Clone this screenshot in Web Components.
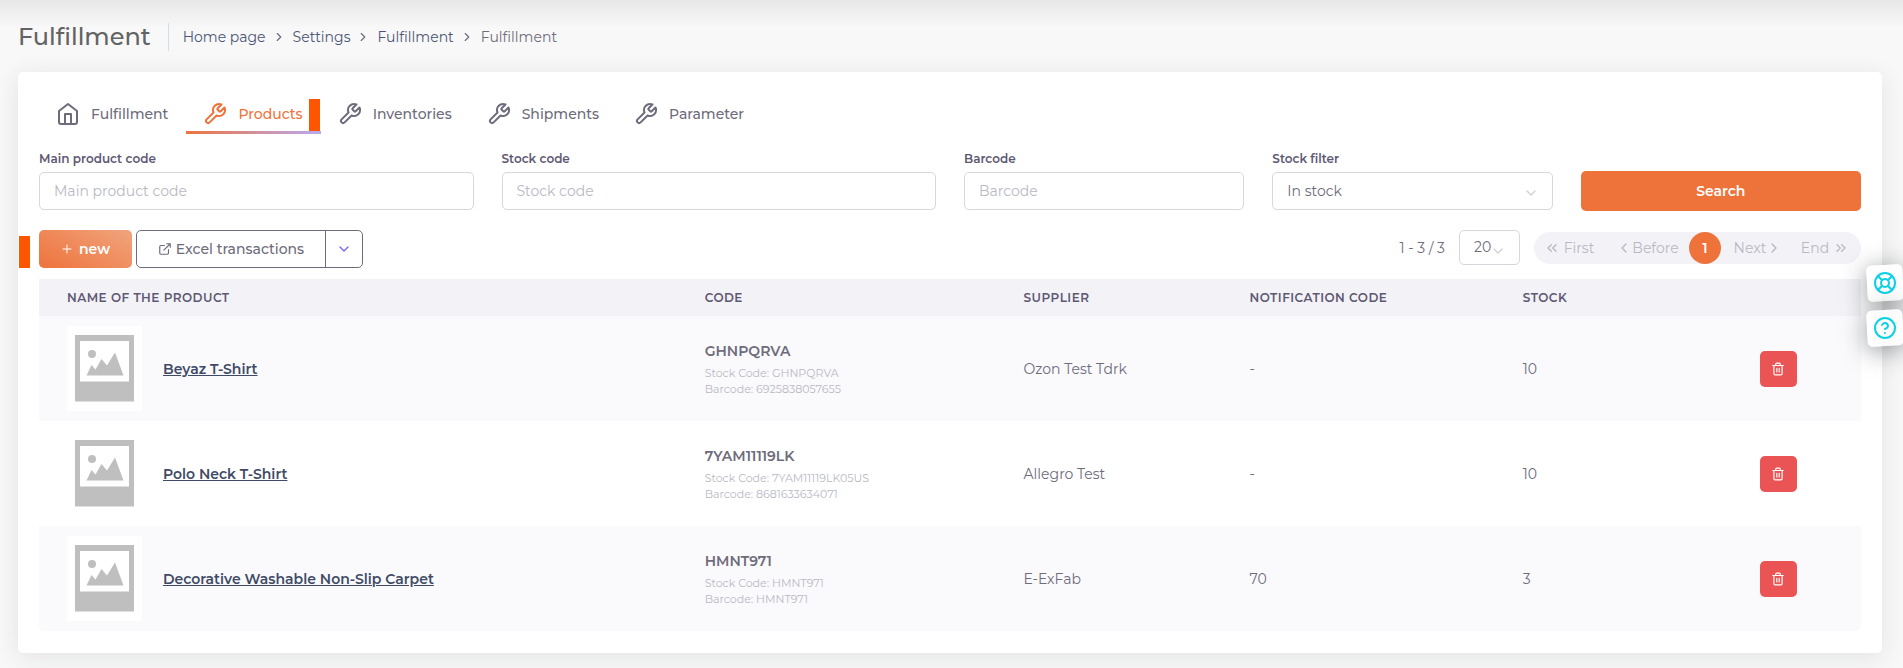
<!DOCTYPE html>
<html lang="en">
<head>
<meta charset="utf-8">
<title>Fulfillment</title>
<meta name="viewport" content="width=device-width, initial-scale=1">
<style>
  html { height: 100%; }
  body {
    margin: 0;
    min-height: 100%;
    background: #f8f8f8;
    color: #6e6b7b;
    font: 400 14px/20px Montserrat, Inter, "Open Sans", sans-serif;
    font-variant-ligatures: none;
  }
</style>
</head>
<body>
<fulfillment-page></fulfillment-page>

<script>
const ICONS = {
  home: '<path d="M3 9l9-7 9 7v11a2 2 0 0 1-2 2H5a2 2 0 0 1-2-2z"/><path d="M9 22V12h6v10"/>',
  tool: '<path d="M14.7 6.3a1 1 0 0 0 0 1.4l1.6 1.6a1 1 0 0 0 1.4 0l3.77-3.77a6 6 0 0 1-7.94 7.94l-6.91 6.91a2.12 2.12 0 0 1-3-3l6.91-6.91a6 6 0 0 1 7.94-7.94l-3.76 3.76z"/>',
  right: '<path d="M9 18l6-6-6-6"/>',
  left: '<path d="M15 18l-6-6 6-6"/>',
  down: '<path d="M6 9l6 6 6-6"/>',
  first: '<path d="M11 17l-5-5 5-5M18 17l-5-5 5-5"/>',
  last: '<path d="M13 17l5-5-5-5M6 17l5-5-5-5"/>',
  plus: '<path d="M12 4v16M4 12h16"/>',
  external: '<path d="M18 13v6a2 2 0 0 1-2 2H5a2 2 0 0 1-2-2V8a2 2 0 0 1 2-2h6M15 3h6v6M10 14L21 3"/>',
  trash: '<path d="M3 6h18M19 6v14a2 2 0 0 1-2 2H7a2 2 0 0 1-2-2V6m3 0V4a2 2 0 0 1 2-2h4a2 2 0 0 1 2 2v2M10 11v6M14 11v6"/>',
  buoy: '<circle cx="12" cy="12" r="10"/><circle cx="12" cy="12" r="4"/><path d="M4.93 4.93l4.24 4.24M14.83 14.83l4.24 4.24M14.83 9.17l4.24-4.24M4.93 19.07l4.24-4.24"/>',
  help: '<circle cx="12" cy="12" r="10"/><path d="M9.09 9a3 3 0 0 1 5.83 1c0 2-3 3-3 3M12 17h.01"/>'
};

/* Shared base: renders the class template once into an open shadow root. */
class Base extends HTMLElement {
  connectedCallback() {
    if (this.shadowRoot) return;
    this.attachShadow({ mode: 'open' }).innerHTML =
      '<style>*,*::before,*::after{box-sizing:border-box}button,input,select{font:inherit;font-variant-ligatures:none;margin:0}' +
      this.css() + '</style>' + this.html();
  }
  attr(name, fallback = '') { return this.getAttribute(name) ?? fallback; }
}

customElements.define('ui-icon', class extends Base {
  css() {
    const s = this.attr('size', '14');
    return `:host{display:inline-flex;flex:none;width:${s}px;height:${s}px}
      svg{width:100%;height:100%;fill:none;stroke:currentColor;stroke-width:${this.attr('weight', '2')};stroke-linecap:round;stroke-linejoin:round}`;
  }
  html() { return `<svg viewBox="0 0 24 24" aria-hidden="true">${ICONS[this.attr('name')]}</svg>`; }
});

customElements.define('page-header', class extends Base {
  css() { return `
    :host{display:flex;align-items:center;height:28px}
    h1{margin:0;padding-right:17px;font-size:24px;line-height:28px;font-weight:500;color:#636363;border-right:1px solid #d6dce1}
    nav{display:flex;align-items:center;padding-left:14px}
    ol{display:flex;align-items:center;margin:0;padding:0;list-style:none}
    li{display:flex;align-items:center}
    li ui-icon{margin:0 7px 0 6px}
    a{color:#4b5575;text-decoration:none}`; }
  html() {
    return `<h1>Fulfillment</h1><nav aria-label="Breadcrumb"><ol>
      <li><a href="#">Home page</a><ui-icon name="right"></ui-icon></li>
      <li><a href="#">Settings</a><ui-icon name="right"></ui-icon></li>
      <li><a href="#">Fulfillment</a><ui-icon name="right"></ui-icon></li>
      <li>Fulfillment</li></ol></nav>`;
  }
});

customElements.define('nav-tab', class extends Base {
  css() { return `
    :host{display:block;position:relative}
    a{display:flex;align-items:center;gap:11px;height:40px;padding:0 18px 0 17px;color:inherit;text-decoration:none;font-weight:500}
    :host([active]){color:#ee733b}
    :host([active]) a::after{content:"";position:absolute;left:0;right:0;bottom:0;height:3px;background:linear-gradient(30deg,#ee733b,#b9aaf5)}
    .mark{display:none}
    :host([active]) .mark{display:block;position:absolute;right:1px;bottom:3px;width:11px;height:32px;background:#ff5500}`; }
  html() { return `<a href="#"><ui-icon name="${this.attr('icon')}" size="24"></ui-icon><slot></slot></a><span class="mark"></span>`; }
});

customElements.define('form-field', class extends Base {
  css() { return `
    :host{display:block}
    label{display:block;height:14px;margin-bottom:6px;font-size:12px;line-height:14px;font-weight:600;color:#5e5873}
    .box{position:relative}
    input,select{display:block;width:100%;height:38px;padding:0 14px 1px;border:1px solid #d8d6de;border-radius:5px;background:#fff;color:#6e6b7b;appearance:none;outline:0}
    input::placeholder{color:#b9b9c3;opacity:1}
    ui-icon{position:absolute;right:14px;top:13px;color:#d0d0d6}`; }
  html() {
    const label = this.attr('label');
    const control = this.hasAttribute('option')
      ? `<select id="c"><option>${this.attr('option')}</option></select><ui-icon name="down" size="16"></ui-icon>`
      : `<input id="c" type="text" placeholder="${label}">`;
    return `<label for="c">${label}</label><div class="box">${control}</div>`;
  }
});

customElements.define('filter-form', class extends Base {
  css() { return `
    :host{display:grid;grid-template-columns:repeat(12,1fr);column-gap:28px;align-items:end}
    form-field{grid-column:span 2}
    form-field[wide]{grid-column:span 3}
    button{grid-column:span 2;height:40px;margin-bottom:-1px;padding:0;border:0;border-radius:5px;background:#ee733b;color:#fff;font-weight:600}`; }
  html() {
    return `<form-field wide label="Main product code"></form-field>
      <form-field wide label="Stock code"></form-field>
      <form-field label="Barcode"></form-field>
      <form-field label="Stock filter" option="In stock"></form-field>
      <button type="button">Search</button>`;
  }
});

customElements.define('page-nav', class extends Base {
  css() { return `
    :host{display:flex;align-items:center}
    .count{margin-right:14px}
    .size{position:relative;margin-right:14px}
    select{display:block;width:61px;height:35px;padding:0 0 2px 14px;border:1px solid #d8d6de;border-radius:5px;background:#fff;color:#6e6b7b;appearance:none}
    .size ui-icon{position:absolute;right:14px;top:13px;color:#d0d0d6}
    nav{display:grid;grid-template-columns:74px 81px 32px 68px 72px;height:32px;border-radius:16px;background:#f3f2f7}
    a{display:flex;align-items:center;justify-content:center;color:#b9b9c3;text-decoration:none}
    .far{gap:4px}
    .first{padding-right:4px}
    .before{padding-right:2px}
    .next{padding-left:6px}
    .on{border-radius:16px;background:#ee733b;color:#fff;font-weight:600}`; }
  html() {
    return `<span class="count">1 - 3 / 3</span>
      <div class="size"><select aria-label="Rows per page"><option>20</option></select><ui-icon name="down" size="16"></ui-icon></div>
      <nav aria-label="Pages">
        <a class="far first" href="#"><ui-icon name="first" size="16"></ui-icon>First</a>
        <a class="before" href="#"><ui-icon name="left" size="16"></ui-icon>Before</a>
        <a class="on" href="#" aria-current="page">1</a>
        <a class="next" href="#">Next<ui-icon name="right" size="16"></ui-icon></a>
        <a class="far" href="#">End<ui-icon name="last" size="16"></ui-icon></a>
      </nav>`;
  }
});

customElements.define('action-bar', class extends Base {
  css() { return `
    :host{display:flex;align-items:flex-start;position:relative}
    .mark{position:absolute;left:-20px;top:6px;width:11px;height:32px;background:#ff5500}
    button{display:flex;align-items:center;justify-content:center;height:38px;padding:0;color:#6e6b7b;background:#fff;border:1px solid #6e6b7b}
    .new{gap:6px;width:93px;margin-right:4px;border:0;border-radius:5px;background:linear-gradient(30deg,#ee733b,#f1a47e);color:#fff;font-weight:600}
    .excel{gap:4px;width:190px;border-radius:5px 0 0 5px;font-weight:500}
    .more{width:38px;margin-left:-1px;border-radius:0 5px 5px 0;color:#7367f0}
    page-nav{margin-left:auto}`; }
  html() {
    return `<span class="mark"></span>
      <button class="new" type="button"><ui-icon name="plus" size="12"></ui-icon>new</button>
      <button class="excel" type="button"><ui-icon name="external"></ui-icon>Excel transactions</button>
      <button class="more" type="button" aria-label="More"><ui-icon name="down" size="16"></ui-icon></button>
      <page-nav></page-nav>`;
  }
});

customElements.define('photo-placeholder', class extends Base {
  css() { return ':host{display:block;flex:none;width:75px;height:85px;background:#fff}svg{display:block}'; }
  html() {
    return `<svg width="75" height="85" viewBox="0 0 75 85" role="img" aria-label="No photo">
      <path fill="#bfbfbf" d="M8 9h59v66.500H8z"/><path fill="#fff" d="M13 15h49v40.500H13z"/>
      <circle cx="25" cy="28" r="4" fill="#bfbfbf"/>
      <path fill="#bfbfbf" d="M19.500 49.500L24.500 39l4 4.500L34.500 33l5.500 6.500L48 26.500l8.500 23z"/></svg>`;
  }
});

customElements.define('product-table', class extends Base {
  rows = [
    ['Beyaz T-Shirt', 'GHNPQRVA', 'GHNPQRVA', '6925838057655', 'Ozon Test Tdrk', '-', '10'],
    ['Polo Neck T-Shirt', '7YAM11119LK', '7YAM11119LK05US', '8681633634071', 'Allegro Test', '-', '10'],
    ['Decorative Washable Non-Slip Carpet', 'HMNT971', 'HMNT971', 'HMNT971', 'E-ExFab', '70', '3']
  ];
  css() { return `
    :host{display:block}
    table{width:100%;table-layout:fixed;border-collapse:collapse}
    th{height:37px;padding:0 28px;background:#f3f2f7;color:#5e5873;font-size:12px;font-weight:600;letter-spacing:0.04em;text-align:left;text-transform:uppercase;white-space:nowrap}
    td{height:105px;padding:0 28px;vertical-align:middle}
    tbody tr:nth-child(odd) td{background:#fafafc}
    tr:last-child td:first-child{border-bottom-left-radius:5px}
    tr:last-child td:last-child{border-bottom-right-radius:5px}
    .item{display:flex;align-items:center;gap:21px}
    .item a{color:#404a66;font-weight:600}
    strong{display:block;margin-bottom:4px;font-weight:600}
    small{display:block;font-size:11px;line-height:16px;color:#b9b9c3}
    button{display:flex;align-items:center;justify-content:center;width:37px;height:36px;padding:0;border:0;border-radius:5px;background:#ea5455;color:#fff}`; }
  html() {
    const cols = ['35%', '17.5%', '12.4%', '15%', '13%', 'auto'].map(w => `<col style="width:${w}">`).join('');
    const head = ['Name of the product', 'Code', 'Supplier', 'Notification code', 'Stock', '']
      .map(t => t ? `<th scope="col">${t}</th>` : '<th aria-label="Actions"></th>').join('');
    const body = this.rows.map(([name, code, stockCode, barcode, supplier, note, stock]) => `<tr>
      <td><div class="item"><photo-placeholder></photo-placeholder><a href="#">${name}</a></div></td>
      <td><strong>${code}</strong><small>Stock Code: ${stockCode}</small><small>Barcode: ${barcode}</small></td>
      <td>${supplier}</td><td>${note}</td><td>${stock}</td>
      <td><button type="button" aria-label="Delete ${name}"><ui-icon name="trash"></ui-icon></button></td></tr>`).join('');
    return `<table><colgroup>${cols}</colgroup><thead><tr>${head}</tr></thead><tbody>${body}</tbody></table>`;
  }
});

customElements.define('float-help', class extends Base {
  css() { return `
    :host{position:fixed;right:0;top:265px;display:grid;gap:9px}
    button{display:flex;align-items:center;justify-content:center;width:36px;height:36px;padding:0;border:0;border-radius:5px;background:linear-gradient(#ffffffe6,#ffffffb3);color:#0cd1e8;box-shadow:0 4px 24px #22292f80;transform:rotate(-3deg)}
    ui-icon{transform:rotate(3deg)}`; }
  html() {
    return `<button type="button" aria-label="Support"><ui-icon name="buoy" size="24"></ui-icon></button>
      <button type="button" aria-label="Help"><ui-icon name="help" size="24"></ui-icon></button>`;
  }
});

customElements.define('fulfillment-page', class extends Base {
  css() { return `
    :host{display:block;padding:23px 21px 14px 18px;background:linear-gradient(#e8e8e8,#f8f8f800 28px)}
    main{margin-top:21px;padding:22px 21px;border-radius:5px;background:#fff;box-shadow:0 4px 24px #22292f1a}
    .tabs{display:flex;margin-bottom:18px}
    action-bar{margin:20px 0 11px}`; }
  html() {
    return `<page-header></page-header>
      <main>
        <nav class="tabs">
          <nav-tab icon="home">Fulfillment</nav-tab>
          <nav-tab icon="tool" active>Products</nav-tab>
          <nav-tab icon="tool">Inventories</nav-tab>
          <nav-tab icon="tool">Shipments</nav-tab>
          <nav-tab icon="tool">Parameter</nav-tab>
        </nav>
        <filter-form></filter-form>
        <action-bar></action-bar>
        <product-table></product-table>
      </main>
      <float-help></float-help>`;
  }
});
</script>
</body>
</html>
